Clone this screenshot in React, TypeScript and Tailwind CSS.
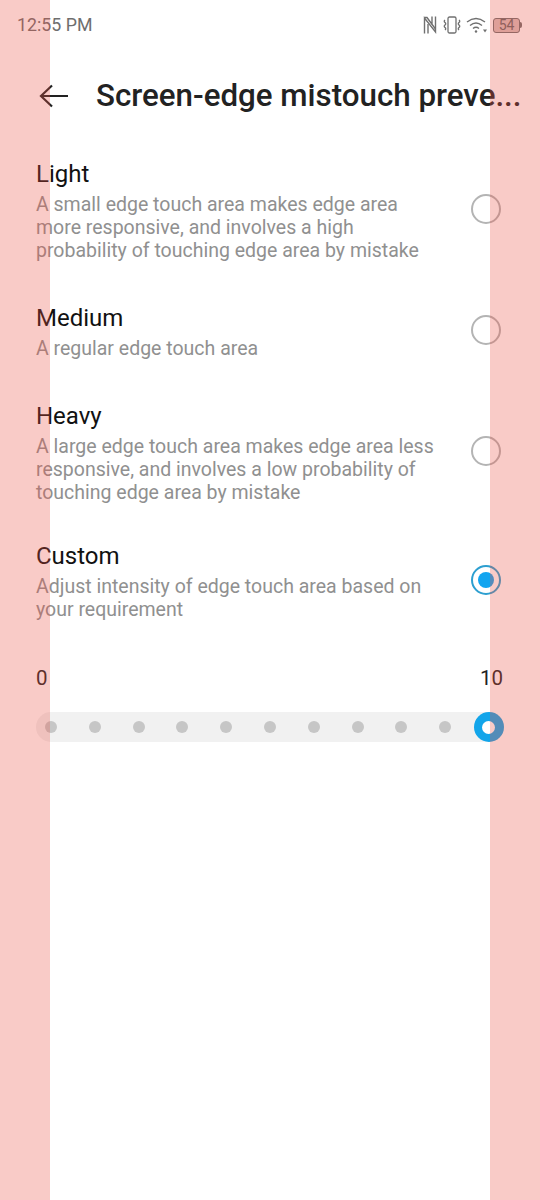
import React from "react";

const options = [
  { t: "Light", d: ["A small edge touch area makes edge area", "more responsive, and involves a high", "probability of touching edge area by mistake"], pb: "pb-[38px]" },
  { t: "Medium", d: ["A regular edge touch area"], pb: "pb-[38px]" },
  { t: "Heavy", d: ["A large edge touch area makes edge area less", "responsive, and involves a low probability of", "touching edge area by mistake"], pb: "pb-[34px]" },
  { t: "Custom", d: ["Adjust intensity of edge touch area based on", "your requirement"], pb: "", on: true },
];

function StatusIcons() {
  return (
    <div className="flex items-center gap-[5px] text-[#777]">
      <svg width="14" height="20" viewBox="0 0 14 20" fill="none" stroke="#707070" strokeWidth="1.400">
        <path d="M1.500 18.500V3L12.500 17V1.500" />
        <path d="M1.500 2.500H4L12.500 14M5 18.500V9M9 1.500V10" />
      </svg>
      <svg width="20" height="18" viewBox="0 0 20 18" fill="none" stroke="#707070" strokeWidth="1.300">
        <rect x="6" y="1" width="8" height="16" rx="1.500" />
        <path d="M3 4q-1.500 1.200 0 2.500t0 2.500 0 2.500 0 2.500M17 4q1.500 1.200 0 2.500t0 2.500 0 2.500 0 2.500" />
      </svg>
      <svg width="22" height="18" viewBox="0 0 22 18" fill="none" stroke="#707070" strokeWidth="1.400" className="ml-[-1px]">
        <path d="M1 6q9-7 18 0M4 9.500q6-5 12 0M7 12.500q3-2.500 6 0" />
        <circle cx="10" cy="15.500" r="1.200" fill="#707070" stroke="none" />
        <path d="M17 13.500h4l-2 3z" fill="#707070" stroke="none" />
      </svg>
      <div className="flex items-center">
        <div className="flex h-[15px] w-[27px] items-center justify-center rounded-[3px] border border-[#707070] bg-[#d9c0bc] text-[14px] leading-none text-[#666]">54</div>
        <div className="h-[6px] w-[2px] rounded-r-sm bg-[#707070]" />
      </div>
    </div>
  );
}

function Radio({ on }: { on?: boolean }) {
  return on ? (
    <div className="flex h-[30px] w-[30px] shrink-0 items-center justify-center rounded-full border-2 border-[#2d9fd0]">
      <div className="h-[16px] w-[16px] rounded-full bg-[#12a5f0]" />
    </div>
  ) : (
    <div className="h-[30px] w-[30px] shrink-0 rounded-full border-2 border-[#b4b4b4]" />
  );
}

export default function App() {
  return (
    <div className="relative h-[1200px] w-[540px] overflow-hidden bg-white font-['Roboto',sans-serif]">
      <div className="flex h-[50px] items-center justify-between pl-[17px] pr-[18px]">
        <span className="text-[17.800px] text-[#6e6e6e]">12:55 PM</span>
        <StatusIcons />
      </div>

      <div className="flex h-[92px] items-center pl-[39px]">
        <svg width="30" height="24" viewBox="0 0 30 24" fill="none" stroke="#222" strokeWidth="2.200" className="shrink-0">
          <path d="M29 12H2M13 1.500 2 12l11 10.500" />
        </svg>
        <h1 className="ml-[27px] whitespace-nowrap text-[31.300px] font-medium leading-none text-[#222]">Screen-edge mistouch preve...</h1>
      </div>

      <div className="flex flex-col pl-[36px] pr-[39px] pt-[14px]">
        {options.map((o) => (
          <div key={o.t} className={`flex items-start ${o.pb}`}>
            <div className="flex w-full items-center justify-between">
              <div>
                <div className="text-[24px] leading-[36px] text-[#111]">{o.t}</div>
                <div className="mt-[1px] text-[19.500px] leading-[23px] text-[#909090]">
                  {o.d.map((l) => (
                    <div key={l} className="whitespace-nowrap">{l}</div>
                  ))}
                </div>
              </div>
              <Radio on={o.on} />
            </div>
          </div>
        ))}
      </div>

      <div className="flex justify-between pl-[36px] pr-[37px] pt-[45px] text-[20.500px] leading-[24px] text-[#222]">
        <span>0</span>
        <span>10</span>
      </div>

      <div className="mx-[36px] mt-[22px] flex h-[30px] items-center justify-between rounded-full bg-[#f1f1f1]">
        {Array.from({ length: 11 }).map((_, i) =>
          i === 10 ? (
            <div key={i} className="flex h-[30px] w-[30px] items-center justify-center rounded-full bg-[#12a5ea]">
              <div className="h-[13px] w-[13px] rounded-full bg-white" />
            </div>
          ) : (
            <div key={i} className="flex h-[30px] w-[30px] items-center justify-center">
              <div className="h-[12px] w-[12px] rounded-full bg-[#c6c6c6]" />
            </div>
          ),
        )}
      </div>

      <div className="pointer-events-none absolute inset-y-0 left-0 w-[50px] bg-[rgba(235,82,68,0.3)]" />
      <div className="pointer-events-none absolute inset-y-0 right-0 w-[50px] bg-[rgba(235,82,68,0.3)]" />
    </div>
  );
}
